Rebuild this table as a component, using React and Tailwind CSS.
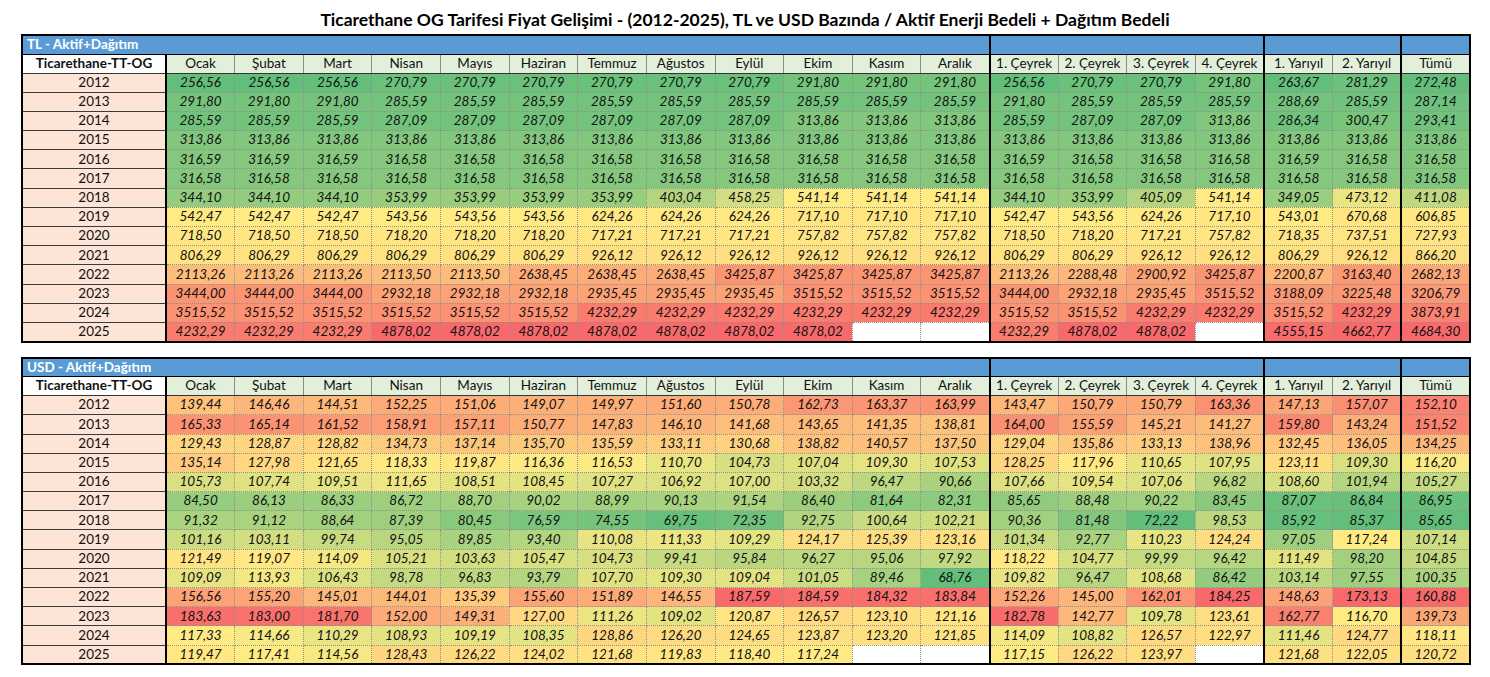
import React from "react";

const MONTHS = ["Ocak", "Şubat", "Mart", "Nisan", "Mayıs", "Haziran", "Temmuz", "Ağustos", "Eylül", "Ekim", "Kasım", "Aralık"];
const OTHERS = ["1. Çeyrek", "2. Çeyrek", "3. Çeyrek", "4. Çeyrek", "1. Yarıyıl", "2. Yarıyıl", "Tümü"];
const HEADERS = [...MONTHS, ...OTHERS];

const TL = [
  "2012 256,56 256,56 256,56 270,79 270,79 270,79 270,79 270,79 270,79 291,80 291,80 291,80 256,56 270,79 270,79 291,80 263,67 281,29 272,48",
  "2013 291,80 291,80 291,80 285,59 285,59 285,59 285,59 285,59 285,59 285,59 285,59 285,59 291,80 285,59 285,59 285,59 288,69 285,59 287,14",
  "2014 285,59 285,59 285,59 287,09 287,09 287,09 287,09 287,09 287,09 313,86 313,86 313,86 285,59 287,09 287,09 313,86 286,34 300,47 293,41",
  "2015 313,86 313,86 313,86 313,86 313,86 313,86 313,86 313,86 313,86 313,86 313,86 313,86 313,86 313,86 313,86 313,86 313,86 313,86 313,86",
  "2016 316,59 316,59 316,59 316,58 316,58 316,58 316,58 316,58 316,58 316,58 316,58 316,58 316,59 316,58 316,58 316,58 316,59 316,58 316,58",
  "2017 316,58 316,58 316,58 316,58 316,58 316,58 316,58 316,58 316,58 316,58 316,58 316,58 316,58 316,58 316,58 316,58 316,58 316,58 316,58",
  "2018 344,10 344,10 344,10 353,99 353,99 353,99 353,99 403,04 458,25 541,14 541,14 541,14 344,10 353,99 405,09 541,14 349,05 473,12 411,08",
  "2019 542,47 542,47 542,47 543,56 543,56 543,56 624,26 624,26 624,26 717,10 717,10 717,10 542,47 543,56 624,26 717,10 543,01 670,68 606,85",
  "2020 718,50 718,50 718,50 718,20 718,20 718,20 717,21 717,21 717,21 757,82 757,82 757,82 718,50 718,20 717,21 757,82 718,35 737,51 727,93",
  "2021 806,29 806,29 806,29 806,29 806,29 806,29 926,12 926,12 926,12 926,12 926,12 926,12 806,29 806,29 926,12 926,12 806,29 926,12 866,20",
  "2022 2113,26 2113,26 2113,26 2113,50 2113,50 2638,45 2638,45 2638,45 3425,87 3425,87 3425,87 3425,87 2113,26 2288,48 2900,92 3425,87 2200,87 3163,40 2682,13",
  "2023 3444,00 3444,00 3444,00 2932,18 2932,18 2932,18 2935,45 2935,45 2935,45 3515,52 3515,52 3515,52 3444,00 2932,18 2935,45 3515,52 3188,09 3225,48 3206,79",
  "2024 3515,52 3515,52 3515,52 3515,52 3515,52 3515,52 4232,29 4232,29 4232,29 4232,29 4232,29 4232,29 3515,52 3515,52 4232,29 4232,29 3515,52 4232,29 3873,91",
  "2025 4232,29 4232,29 4232,29 4878,02 4878,02 4878,02 4878,02 4878,02 4878,02 4878,02 - - 4232,29 4878,02 4878,02 - 4555,15 4662,77 4684,30",
];

const USD = [
  "2012 139,44 146,46 144,51 152,25 151,06 149,07 149,97 151,60 150,78 162,73 163,37 163,99 143,47 150,79 150,79 163,36 147,13 157,07 152,10",
  "2013 165,33 165,14 161,52 158,91 157,11 150,77 147,83 146,10 141,68 143,65 141,35 138,81 164,00 155,59 145,21 141,27 159,80 143,24 151,52",
  "2014 129,43 128,87 128,82 134,73 137,14 135,70 135,59 133,11 130,68 138,82 140,57 137,50 129,04 135,86 133,13 138,96 132,45 136,05 134,25",
  "2015 135,14 127,98 121,65 118,33 119,87 116,36 116,53 110,70 104,73 107,04 109,30 107,53 128,25 117,96 110,65 107,95 123,11 109,30 116,20",
  "2016 105,73 107,74 109,51 111,65 108,51 108,45 107,27 106,92 107,00 103,32 96,47 90,66 107,66 109,54 107,06 96,82 108,60 101,94 105,27",
  "2017 84,50 86,13 86,33 86,72 88,70 90,02 88,99 90,13 91,54 86,40 81,64 82,31 85,65 88,48 90,22 83,45 87,07 86,84 86,95",
  "2018 91,32 91,12 88,64 87,39 80,45 76,59 74,55 69,75 72,35 92,75 100,64 102,21 90,36 81,48 72,22 98,53 85,92 85,37 85,65",
  "2019 101,16 103,11 99,74 95,05 89,85 93,40 110,08 111,33 109,29 124,17 125,39 123,16 101,34 92,77 110,23 124,24 97,05 117,24 107,14",
  "2020 121,49 119,07 114,09 105,21 103,63 105,47 104,73 99,41 95,84 96,27 95,06 97,92 118,22 104,77 99,99 96,42 111,49 98,20 104,85",
  "2021 109,09 113,93 106,43 98,78 96,83 93,79 107,70 109,30 109,04 101,05 89,46 68,76 109,82 96,47 108,68 86,42 103,14 97,55 100,35",
  "2022 156,56 155,20 145,01 144,01 135,39 155,60 151,89 146,55 187,59 184,59 184,32 183,84 152,26 145,00 162,01 184,25 148,63 173,13 160,88",
  "2023 183,63 183,00 181,70 152,00 149,31 127,00 111,26 109,02 120,87 126,57 123,10 121,16 182,78 142,77 109,78 123,61 162,77 116,70 139,73",
  "2024 117,33 114,66 110,29 108,93 109,19 108,35 128,86 126,20 124,65 123,87 123,20 121,85 114,09 108,82 126,57 122,97 111,46 124,77 118,11",
  "2025 119,47 117,41 114,56 128,43 126,22 124,02 121,68 119,83 118,40 117,24 - - 117,15 126,22 123,97 - 121,68 122,05 120,72",
];

const SECTIONS = [[0, 12], [12, 16], [16, 18], [18, 19]];
const GROUP_START = new Set([0, 12, 16, 18]);

const GREEN = [99, 190, 123];
const YELLOW = [255, 235, 132];
const RED = [248, 105, 107];

function lerp(a, b, t) {
  return a.map((v, i) => Math.round(v + (b[i] - v) * t));
}

function makeScale(values) {
  const s = [...values].sort((a, b) => a - b);
  const min = s[0];
  const max = s[s.length - 1];
  const rank = 0.5 * (s.length - 1);
  const lo = Math.floor(rank);
  const hi = Math.ceil(rank);
  const mid = s[lo] + (s[hi] - s[lo]) * (rank - lo);
  return (v) => {
    let c;
    if (v <= mid) {
      const t = mid === min ? 0 : (v - min) / (mid - min);
      c = lerp(GREEN, YELLOW, t);
    } else {
      const t = max === mid ? 1 : (v - mid) / (max - mid);
      c = lerp(YELLOW, RED, t);
    }
    return `rgb(${c[0]}, ${c[1]}, ${c[2]})`;
  };
}

function DataTable({ label, rows }) {
  const parsed = rows.map((r) => {
    const [year, ...raw] = r.split(" ");
    return {
      year,
      raw,
      vals: raw.map((v) => (v === "-" ? null : parseFloat(v.replace(",", ".")))),
    };
  });
  const scales = SECTIONS.map(([a, b]) =>
    makeScale(parsed.flatMap((p) => p.vals.slice(a, b)).filter((v) => v != null))
  );
  const scaleFor = (i) => scales[SECTIONS.findIndex(([a, b]) => i >= a && i < b)];

  return (
    <table className="w-[1450px] table-fixed border-collapse border-2 border-black text-[13.5px] text-[#111]">
      <colgroup>
        <col className="w-[144px]" />
        {HEADERS.map((h) => (
          <col key={h} />
        ))}
      </colgroup>
      <thead>
        <tr className="h-[19px] bg-[#5b9bd5]">
          <td colSpan={13} className="border-x-2 border-t-2 border-b border-black pl-[4px] text-left font-bold text-white leading-none">
            {label}
          </td>
          <td colSpan={4} className="border-x-2 border-t-2 border-b border-black"></td>
          <td colSpan={2} className="border-x-2 border-t-2 border-b border-black"></td>
          <td className="border-x-2 border-t-2 border-b border-black"></td>
        </tr>
        <tr className="h-[19px]">
          <td className="border-r-2 border-r-black border-b border-b-[#333] bg-white text-center font-bold leading-none">
            Ticarethane-TT-OG
          </td>
          {HEADERS.map((h, i) => (
            <td
              key={h}
              className={`border border-[#8a8a8a] border-b-[#333] bg-[#e2efda] text-center leading-none ${
                GROUP_START.has(i) ? "border-l-2 border-l-black" : ""
              }`}
            >
              {h}
            </td>
          ))}
        </tr>
      </thead>
      <tbody>
        {parsed.map((p) => (
          <tr key={p.year} className="h-[19.2px]">
            <td className="border-r-2 border-r-black border-b border-b-[#3a3a3a] bg-[#fce4d6] text-center leading-none">
              {p.year}
            </td>
            {p.vals.map((v, i) => (
              <td
                key={i}
                className={`border border-dotted border-[#8f8f8f] text-center italic leading-none ${
                  GROUP_START.has(i) ? "border-l-2 border-l-black [border-left-style:solid]" : ""
                } ${v == null ? "bg-white" : ""}`}
                style={v == null ? undefined : { backgroundColor: scaleFor(i)(v) }}
              >
                {v == null ? "" : p.raw[i]}
              </td>
            ))}
          </tr>
        ))}
      </tbody>
    </table>
  );
}

export default function App() {
  return (
    <div className="min-h-[677px] w-[1490px] bg-white font-['Lato',sans-serif]">
      <h1 className="pt-[8px] text-center text-[17.5px] font-bold leading-[24px] text-black">
        Ticarethane OG Tarifesi Fiyat Gelişimi - (2012-2025), TL ve USD Bazında / Aktif Enerji Bedeli + Dağıtım Bedeli
      </h1>
      <div className="ml-[21px] mt-[2px] flex flex-col gap-[14px]">
        <DataTable label="TL - Aktif+Dağıtım" rows={TL} />
        <DataTable label="USD - Aktif+Dağıtım" rows={USD} />
      </div>
    </div>
  );
}
